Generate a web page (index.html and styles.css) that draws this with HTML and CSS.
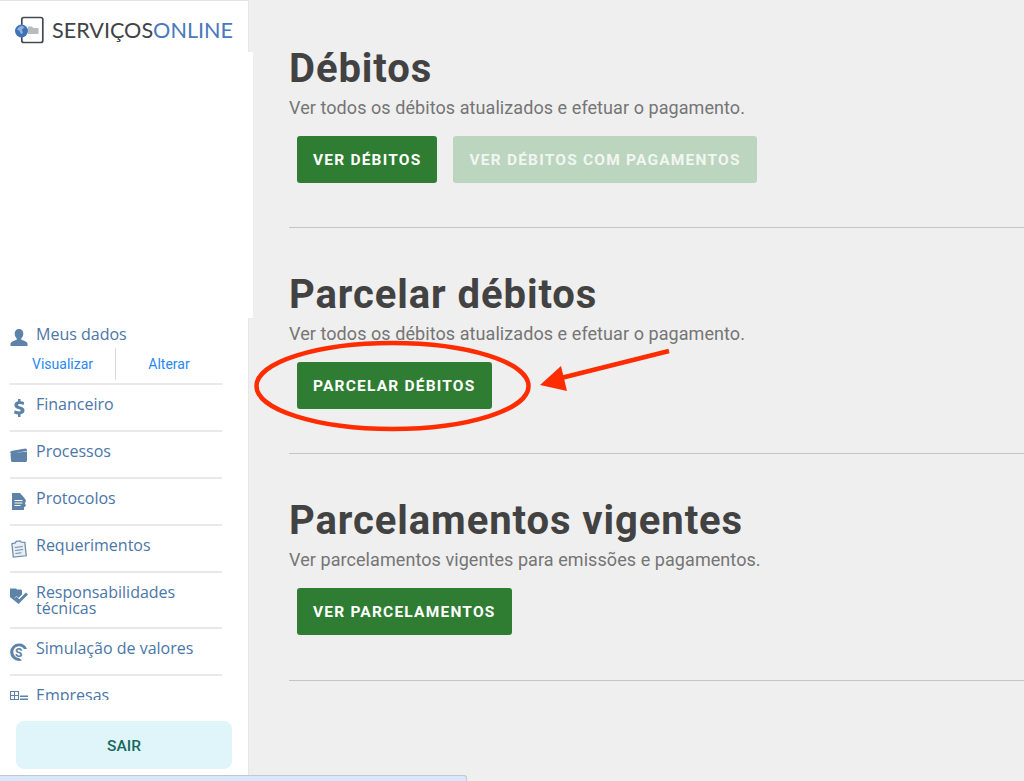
FILE: index.html
```html
<!DOCTYPE html>
<html lang="pt-BR">
<head>
<meta charset="utf-8">
<title>Serviços Online</title>
<link rel="stylesheet" href="styles.css">
</head>
<body>
<div class="app">
  <aside class="sidebar">
    <header class="brand">
      <svg class="brand-icon" width="30" height="28" viewBox="0 0 30 28">
        <rect x="7.800" y="1.500" width="21" height="25" rx="2" fill="#fff" stroke="#444b50" stroke-width="1.700"/>
        <path d="M14 10.500h4l1 1.500h5.500v6H14z" fill="#b9bcbd"/>
        <circle cx="7.500" cy="15" r="6.500" fill="#3f73b8"/>
        <path d="M5 11l3-1.500 2.500 2-2.500 2 1 3.500-2 1-1.500-3-2.500-1.500z" fill="#8fb0d8"/>
      </svg>
      <span class="brand-name">SERVIÇOS<span class="brand-accent">ONLINE</span></span>
    </header>
    <div class="blank"></div>
    <nav class="nav">
      <div class="nav-item nav-first">
        <div class="nav-main">
          <svg class="ico" viewBox="0 0 18 18"><path d="M9 0c3 0 4.300 2.200 4.300 4.800 0 2-1 3.800-2 4.600v1.400c2.800 1 5.700 2 6.200 3.700V17H.5v-2.500c.5-1.700 3.400-2.700 6.200-3.700V9.400c-1-.8-2-2.600-2-4.600C4.700 2.200 6 0 9 0z"/></svg>
          <span>Meus dados</span>
        </div>
        <div class="sub">
          <a class="sub-link sub-left">Visualizar</a>
          <a class="sub-link sub-right">Alterar</a>
        </div>
      </div>
      <div class="nav-item">
        <div class="nav-main">
          <svg class="ico" viewBox="0 0 18 18"><path d="M8 0h2.500v2.200c1.500.1 2.800.5 3.700 1L13.500 6c-1.200-.6-2.600-1-3.800-1-1.200 0-1.700.4-1.700.9 0 .7.800 1 2.500 1.500 2.700.8 4 1.900 4 4 0 2-1.400 3.400-4 3.800V18H8v-2.600c-1.600-.1-3.100-.6-4-1.200l.8-2.900c1 .6 2.600 1.200 4.100 1.200 1.100 0 1.800-.4 1.800-1 0-.7-.7-1-2.400-1.500C5.900 9.300 4.400 8.200 4.400 6c0-1.900 1.300-3.300 3.600-3.700z"/></svg>
          <span>Financeiro</span>
        </div>
      </div>
      <div class="nav-item">
        <div class="nav-main">
          <svg class="ico" viewBox="0 0 18 18"><path d="M0 6.500 1 5l14.500-2.500 1.500 1v1.200L4 7.500 2.500 8.500z"/><path d="M.5 7.500 17 5.500V15l-1 1H2l-1-1z"/></svg>
          <span>Processos</span>
        </div>
      </div>
      <div class="nav-item">
        <div class="nav-main">
          <svg class="ico" viewBox="0 0 18 18"><path fill-rule="evenodd" d="M2 0h8l4 4.500 2 3-1 3 1 2-2 2V17H2zM4.500 7v1h8V7zm0 2.500v1h8v-1zm0 2.500v1h6v-1z"/></svg>
          <span>Protocolos</span>
        </div>
      </div>
      <div class="nav-item">
        <div class="nav-main">
          <svg class="ico" viewBox="0 0 18 18"><g transform="rotate(-6 9 9)"><path d="M2.500 3 6 2.500 7 1h4l1 1.500 3.500.5v13.500h-13z" fill="#e8eef4" stroke="#6f8fae" stroke-width="1.300"/><path d="M5 7h8M5 10h8M5 13h6" stroke="#6f8fae" fill="none"/></g></svg>
          <span>Requerimentos</span>
        </div>
      </div>
      <div class="nav-item">
        <div class="nav-main">
          <svg class="ico" viewBox="0 0 18 18"><path d="M0 1.500h6l1 1h4l1 1v4L8.500 11 6.500 9l-2 2 5 5L8.500 17 0 10z"/><path d="M6.500 9.500l2.700 2.700L16 5.500l2 2-8.800 8.800-4.700-4.800z"/></svg>
          <span>Responsabilidades<br>técnicas</span>
        </div>
      </div>
      <div class="nav-item">
        <div class="nav-main">
          <svg class="ico" viewBox="0 0 18 18"><path d="M9 .5a8.500 8.500 0 0 1 8 5.500h-3A5.800 5.800 0 0 0 3.300 9 6 6 0 0 0 9 15l3 2.500a8.500 8.500 0 0 1-3 .5A8.800 8.800 0 0 1 .2 9 8.700 8.700 0 0 1 9 .5z"/><text class="ico-s" x="5" y="13.500">S</text></svg>
          <span>Simulação de valores</span>
        </div>
      </div>
      <div class="nav-item">
        <div class="nav-main">
          <svg class="ico" viewBox="0 0 18 18"><path fill-rule="evenodd" d="M0 1h9v9H0zm1 1v3h3V2zm4 0v3h3V2zM1 6v3h3V6zm4 0v3h3V6z"/><path d="M10 5.500h8V7h-8zm0 3h8V10h-8z"/></svg>
          <span>Empresas</span>
        </div>
      </div>
    </nav>
    <div class="logout-wrap"><button class="logout">SAIR</button></div>
  </aside>

  <main class="content">
    <section class="section section-first">
      <h1 class="title">Débitos</h1>
      <p class="desc">Ver todos os débitos atualizados e efetuar o pagamento.</p>
      <div class="actions">
        <button class="btn">VER DÉBITOS</button>
        <button class="btn btn-disabled">VER DÉBITOS COM PAGAMENTOS</button>
      </div>
    </section>
    <section class="section">
      <h1 class="title">Parcelar débitos</h1>
      <p class="desc">Ver todos os débitos atualizados e efetuar o pagamento.</p>
      <div class="actions">
        <button class="btn">PARCELAR DÉBITOS</button>
      </div>
    </section>
    <section class="section section-last">
      <h1 class="title">Parcelamentos vigentes</h1>
      <p class="desc">Ver parcelamentos vigentes para emissões e pagamentos.</p>
      <div class="actions">
        <button class="btn">VER PARCELAMENTOS</button>
      </div>
    </section>
  </main>
</div>
<div class="tabbar"></div>
<svg class="annotation" width="1024" height="781" viewBox="0 0 1024 781">
  <ellipse cx="392.500" cy="386" rx="136" ry="43" fill="none" stroke="#ff2c00" stroke-width="4.500"/>
  <path d="M669 351 561 378" fill="none" stroke="#ff2c00" stroke-width="4.500"/>
  <path d="M540 385 561 366 567 391z" fill="#ff2c00"/>
</svg>
</body>
</html>
```
FILE: styles.css
```css
* { box-sizing: border-box; }
html, body { margin: 0; height: 100%; }
body {
  width: 1024px;
  height: 781px;
  overflow: hidden;
  position: relative;
  background: #efefef;
  font-family: Roboto, "Liberation Sans", sans-serif;
}
.app { display: flex; height: 781px; }

.sidebar {
  width: 249px;
  flex: none;
  background: #fff;
  border-right: 1px solid #e6e6e6;
  border-top: 1px solid #e4e4e4;
  display: flex;
  flex-direction: column;
}
.brand {
  height: 51px;
  flex: none;
  display: flex;
  align-items: center;
  gap: 8px;
  padding: 6px 0 0 14px;
}
.brand-icon { flex: none; }
.brand-name {
  font-family: Lato, sans-serif;
  font-size: 21.600px;
  color: #3f4347;
}
.brand-accent { color: #4a78bd; }
.blank {
  height: 266px;
  flex: none;
  background: #fff;
  margin-right: -5px;
  position: relative;
}
.nav {
  height: 382px;
  flex: none;
  overflow: hidden;
  padding: 0 26px 0 10px;
}
.nav-item {
  padding: 11px 0;
  border-bottom: 2px solid #e9e9e9;
  min-height: 47px;
}
.nav-first { height: 67px; min-height: 0; padding: 8px 0 0; }
.nav-main {
  display: flex;
  gap: 8px;
  font-family: "Open Sans", sans-serif;
  font-size: 16px;
  line-height: 16px;
  color: #4a76a8;
}
.ico {
  width: 18px;
  height: 18px;
  flex: none;
  fill: #5d83a8;
  margin-top: 3px;
}
.ico-s {
  font-family: Roboto, sans-serif;
  font-size: 12px;
  font-weight: 700;
  fill: #5d83a8;
}
.sub { display: flex; margin-top: 1px; height: 32px; }
.sub-link {
  flex: 1;
  font-size: 14px;
  line-height: 32px;
  color: #2a88f2;
  text-align: center;
}
.sub-left { flex: 0 0 106px; border-right: 1px solid #d9d9d9; }
.logout-wrap { padding: 21px 16px 0; flex: none; }
.logout {
  display: block;
  width: 100%;
  height: 48px;
  padding: 2px 0 0;
  border: 0;
  border-radius: 8px;
  background: #e0f5fa;
  color: #14695f;
  font-family: Roboto, sans-serif;
  font-size: 15.500px;
  font-weight: 500;
}

.content { flex: 1; padding: 0 0 0 40px; min-width: 0; }
.section {
  height: 226px;
  padding-top: 45px;
  border-bottom: 1px solid #c4c4c4;
}
.section-first { height: 228px; padding-top: 47px; }
.section-last { height: 227px; }
.title {
  margin: 0;
  font-size: 40px;
  line-height: 44px;
  font-weight: 700;
  color: #424242;
  letter-spacing: .92px;
}
.desc {
  margin: 5px 0 0;
  font-size: 18px;
  line-height: 24px;
  letter-spacing: .07px;
  color: #757575;
}
.actions { display: flex; gap: 16px; margin: 16px 0 0 8px; }
.btn {
  height: 47px;
  padding: 1px 16px 0;
  border: 0;
  border-radius: 3px;
  background: #2e7d32;
  color: #fff;
  font-family: Roboto, sans-serif;
  font-size: 15.500px;
  font-weight: 700;
  letter-spacing: 1.200px;
  white-space: nowrap;
}
.btn-disabled { background: #bbd5bf; color: #f1f6f1; }

.tabbar {
  position: absolute;
  left: -2px;
  bottom: 0;
  width: 469px;
  height: 6px;
  background: #d9e7fb;
  border: 1px solid #c0c8d4;
  border-bottom: 0;
  border-radius: 3px 3px 0 0;
}
.annotation { position: absolute; left: 0; top: 0; pointer-events: none; }
```
